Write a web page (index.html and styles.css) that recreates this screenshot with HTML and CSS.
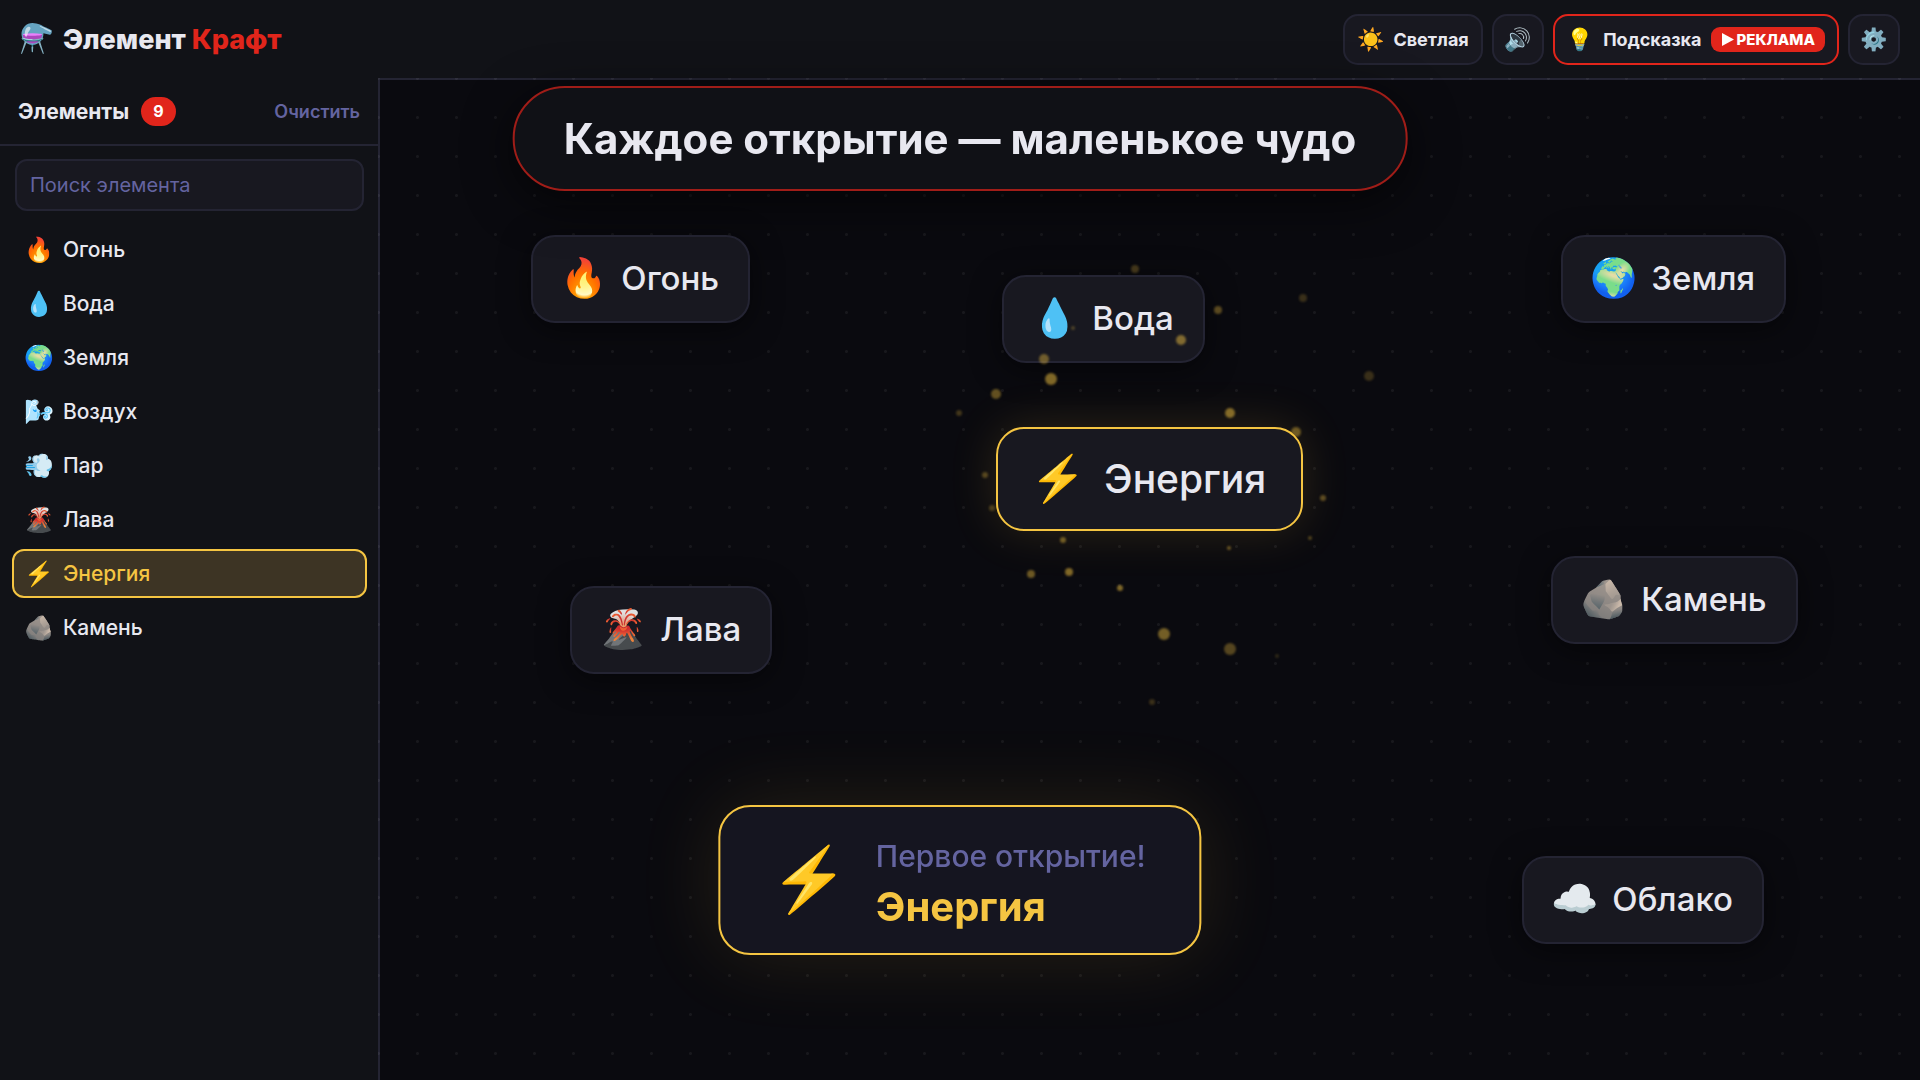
FILE: index.html
```
<!DOCTYPE html>
<html lang="ru">

<head>
    <meta charset="UTF-8" />
    <meta name="viewport" content="width=device-width, initial-scale=1.0" />
    <title>Элемент Крафт</title>
    <link rel="stylesheet" href="styles.css">
</head>

<body>

    <header class="header">
        <h1 class="logo">
            <span class="logo-icon">⚗️</span>
            <span>Элемент <span class="accent">Крафт</span></span>
        </h1>
        <div class="actions">
            <button type="button" class="btn"><span class="btn-icon">☀️</span>Светлая</button>
            <button type="button" class="btn btn-square" aria-label="Звук"><span class="btn-icon">🔊</span></button>
            <button type="button" class="btn btn-hint">
                <span class="btn-icon">💡</span>Подсказка
                <span class="ad"><svg width="13" height="13" viewBox="0 0 13 13"><path d="M1 0L13 6.5L1 13Z" fill="#fff" /></svg>РЕКЛАМА</span>
            </button>
            <button type="button" class="btn btn-square" aria-label="Настройки"><span class="btn-icon">⚙️</span></button>
        </div>
    </header>

    <div class="layout">
        <aside class="sidebar">
            <div class="sidebar-head">
                <h2 class="sidebar-title">Элементы</h2>
                <span class="count">9</span>
                <button type="button" class="clear">Очистить</button>
            </div>
            <div class="search">
                <input type="text" class="search-input" placeholder="Поиск элемента" aria-label="Поиск элемента">
            </div>
            <div class="list">
                <button type="button" class="item"><span class="item-icon">🔥</span>Огонь</button>
                <button type="button" class="item"><span class="item-icon">💧</span>Вода</button>
                <button type="button" class="item"><span class="item-icon">🌍</span>Земля</button>
                <button type="button" class="item"><span class="item-icon">🌬️</span>Воздух</button>
                <button type="button" class="item"><span class="item-icon">💨</span>Пар</button>
                <button type="button" class="item"><span class="item-icon">🌋</span>Лава</button>
                <button type="button" class="item active"><span class="item-icon">⚡</span>Энергия</button>
                <button type="button" class="item"><span class="item-icon">🪨</span>Камень</button>
            </div>
        </aside>

        <main class="board">
            <div class="chip chip-fire"><span class="chip-icon">🔥</span>Огонь</div>
            <div class="chip chip-water"><span class="chip-icon">💧</span>Вода</div>
            <div class="chip chip-earth"><span class="chip-icon">🌍</span>Земля</div>
            <div class="chip chip-lava"><span class="chip-icon">🌋</span>Лава</div>
            <div class="chip chip-stone"><span class="chip-icon">🪨</span>Камень</div>
            <div class="chip chip-cloud"><span class="chip-icon">☁️</span>Облако</div>

            <svg class="sparks" aria-hidden="true">
                <g fill="#f5c542">
                    <circle cx="755" cy="189" r="4" opacity=".24" />
                    <circle cx="838" cy="230" r="4" opacity=".34" />
                    <circle cx="923" cy="218" r="4" opacity=".2" />
                    <circle cx="693" cy="248" r="2" opacity=".26" />
                    <circle cx="801" cy="260" r="5" opacity=".48" />
                    <circle cx="664" cy="279" r="5" opacity=".4" />
                    <circle cx="671" cy="299" r="6" opacity=".5" />
                    <circle cx="616" cy="314" r="5" opacity=".38" />
                    <circle cx="989" cy="296" r="5" opacity=".2" />
                    <circle cx="850" cy="333" r="5" opacity=".5" />
                    <circle cx="916" cy="352" r="5" opacity=".4" />
                    <circle cx="579" cy="333" r="3" opacity=".24" />
                    <circle cx="605" cy="395" r="3" opacity=".3" />
                    <circle cx="612" cy="428" r="3" opacity=".26" />
                    <circle cx="943" cy="418" r="3" opacity=".34" />
                    <circle cx="683" cy="460" r="3" opacity=".42" />
                    <circle cx="651" cy="494" r="4" opacity=".42" />
                    <circle cx="689" cy="492" r="4" opacity=".5" />
                    <circle cx="740" cy="508" r="3" opacity=".5" />
                    <circle cx="849" cy="468" r="2" opacity=".4" />
                    <circle cx="930" cy="458" r="2" opacity=".3" />
                    <circle cx="784" cy="554" r="6" opacity=".45" />
                    <circle cx="850" cy="569" r="6" opacity=".32" />
                    <circle cx="897" cy="576" r="2" opacity=".16" />
                    <circle cx="772" cy="622" r="3" opacity=".2" />
                </g>
            </svg>

            <div class="chip chip-energy"><span class="chip-icon">⚡</span>Энергия</div>
        </main>
    </div>

    <div class="banner">Каждое открытие — маленькое чудо</div>

    <div class="toast">
        <span class="toast-icon">⚡</span>
        <div>
            <div class="toast-label">Первое открытие!</div>
            <div class="toast-name">Энергия</div>
        </div>
    </div>

</body>

</html>
```
FILE: styles.css
```
* {
    box-sizing: border-box;
}

body {
    margin: 0;
    height: 100vh;
    display: flex;
    flex-direction: column;
    overflow: hidden;
    background-color: #0a0a0f;
    color: #e8e8f0;
    font-family: Inter, "Noto Color Emoji", sans-serif;
}

button,
input {
    font-family: inherit;
    color: inherit;
}

/* header */
.header {
    display: flex;
    align-items: center;
    justify-content: space-between;
    height: 78px;
    padding: 0 20px 0 19px;
    background-color: #111217;
}

.logo {
    display: flex;
    align-items: center;
    gap: 9px;
    margin: 0;
    font-size: 27px;
    font-weight: 800;
}

.logo-icon {
    padding-bottom: 2px;
    font-size: 28px;
    font-weight: 400;
}

.accent {
    color: #e1251b;
}

.actions {
    display: flex;
    gap: 9px;
}

.btn {
    display: flex;
    align-items: center;
    justify-content: center;
    gap: 9px;
    height: 51px;
    padding: 0 12px;
    border: 2px solid #242433;
    border-radius: 15px;
    background-color: #181820;
    font-size: 18px;
    font-weight: 700;
}

.btn-icon {
    padding-bottom: 1px;
    font-size: 22px;
    font-weight: 400;
}

.btn-square {
    width: 52px;
    padding: 0;
}

.btn-hint {
    border-color: #e1251b;
}

.ad {
    display: flex;
    align-items: center;
    gap: 3px;
    height: 25px;
    padding: 0 10px;
    border-radius: 9px;
    background-color: #e1251b;
    color: #fff;
    font-size: 15px;
    font-weight: 800;
}

.layout {
    flex: 1;
    display: flex;
    min-height: 0;
}

/* sidebar */
.sidebar {
    width: 378px;
    background-color: #111217;
}

.sidebar-head {
    display: flex;
    align-items: center;
    height: 68px;
    padding: 0 18px;
    border-bottom: 2px solid #242433;
}

.sidebar-title {
    margin: 0;
    font-size: 21px;
    font-weight: 700;
}

.count {
    margin-left: 12px;
    padding: 0 12px;
    border-radius: 15px;
    background-color: #e1251b;
    color: #fff;
    font-size: 16px;
    line-height: 29px;
    font-weight: 700;
}

.clear {
    margin-left: auto;
    padding: 0;
    border: 0;
    background: none;
    color: #6464a0;
    font-size: 18px;
    font-weight: 600;
}

.search {
    padding: 13px 14px 14px 15px;
}

.search-input {
    width: 100%;
    height: 52px;
    padding: 0 13px;
    border: 2px solid #242433;
    border-radius: 12px;
    background-color: #181820;
    font-size: 20px;
}

.search-input::placeholder {
    color: #6464a0;
}

.list {
    display: flex;
    flex-direction: column;
    gap: 5px;
    padding: 0 11px 0 12px;
}

.item {
    display: flex;
    align-items: center;
    gap: 9px;
    height: 49px;
    padding: 0 10px;
    border: 2px solid transparent;
    border-radius: 12px;
    background: none;
    font-size: 21px;
    font-weight: 500;
}

.item-icon {
    padding-bottom: 1px;
    font-size: 24px;
}

.item.active {
    border-color: #f5c542;
    background-color: #3d3424;
    color: #f5c542;
}

/* board */
.board {
    position: relative;
    flex: 1;
    border-left: 2px solid #242433;
    border-top: 2px solid #242433;
}

.board::before {
    content: "";
    position: absolute;
    inset: -2px;
    background-image: radial-gradient(circle, rgba(255, 255, 255, 0.06) 1px, transparent 2px);
    background-size: 39px 39px;
    background-position: -19px -19px;
}

.chip {
    position: absolute;
    display: flex;
    align-items: center;
    gap: 14px;
    height: 88px;
    padding: 0 29px 2px 27px;
    border: 2px solid #242433;
    border-radius: 24px;
    background-color: #181820;
    box-shadow: 0 6px 30px rgba(0, 0, 0, 0.5);
    font-size: 33px;
    font-weight: 500;
    white-space: nowrap;
}

.chip-icon {
    padding-bottom: 2px;
    font-size: 38px;
}

.chip-fire {
    left: 151px;
    top: 155px;
}

.chip-water {
    left: 622px;
    top: 195px;
}

.chip-earth {
    left: 1181px;
    top: 155px;
}

.chip-lava {
    left: 190px;
    top: 506px;
}

.chip-stone {
    left: 1171px;
    top: 476px;
}

.chip-cloud {
    left: 1142px;
    top: 776px;
}

.chip-energy {
    left: 616px;
    top: 347px;
    height: 104px;
    gap: 18px;
    padding: 0 35px 2px 32px;
    border-color: #f5c542;
    border-radius: 28px;
    box-shadow: 0 0 48px rgba(245, 197, 66, 0.15);
    font-size: 39px;
}

.chip-energy .chip-icon {
    font-size: 45px;
}

.sparks {
    position: absolute;
    left: 0;
    top: 0;
    width: 100%;
    height: 100%;
    filter: blur(1px);
}

/* overlays */
.banner {
    position: fixed;
    left: 50%;
    top: 86px;
    transform: translateX(-50%);
    padding: 0 49px;
    border: 2px solid #a01d18;
    border-radius: 52px;
    background-color: #101116;
    box-shadow: 0 12px 48px rgba(0, 0, 0, 0.6);
    font-size: 42px;
    line-height: 101px;
    font-weight: 700;
    white-space: nowrap;
}

.toast {
    position: fixed;
    left: 50%;
    bottom: 125px;
    transform: translateX(-50%);
    display: flex;
    align-items: center;
    gap: 27px;
    height: 150px;
    padding: 0 54px 0 50px;
    border: 2px solid #f5c542;
    border-radius: 32px;
    background-color: #151520;
    box-shadow: 0 0 84px rgba(245, 197, 66, 0.12);
    white-space: nowrap;
}

.toast-icon {
    padding-bottom: 4px;
    font-size: 63px;
}

.toast-label {
    padding-top: 6px;
    color: #6464a0;
    font-size: 30px;
    line-height: 48px;
    font-weight: 500;
}

.toast-name {
    color: #f5c542;
    font-size: 40px;
    line-height: 54px;
    font-weight: 700;
}
```
